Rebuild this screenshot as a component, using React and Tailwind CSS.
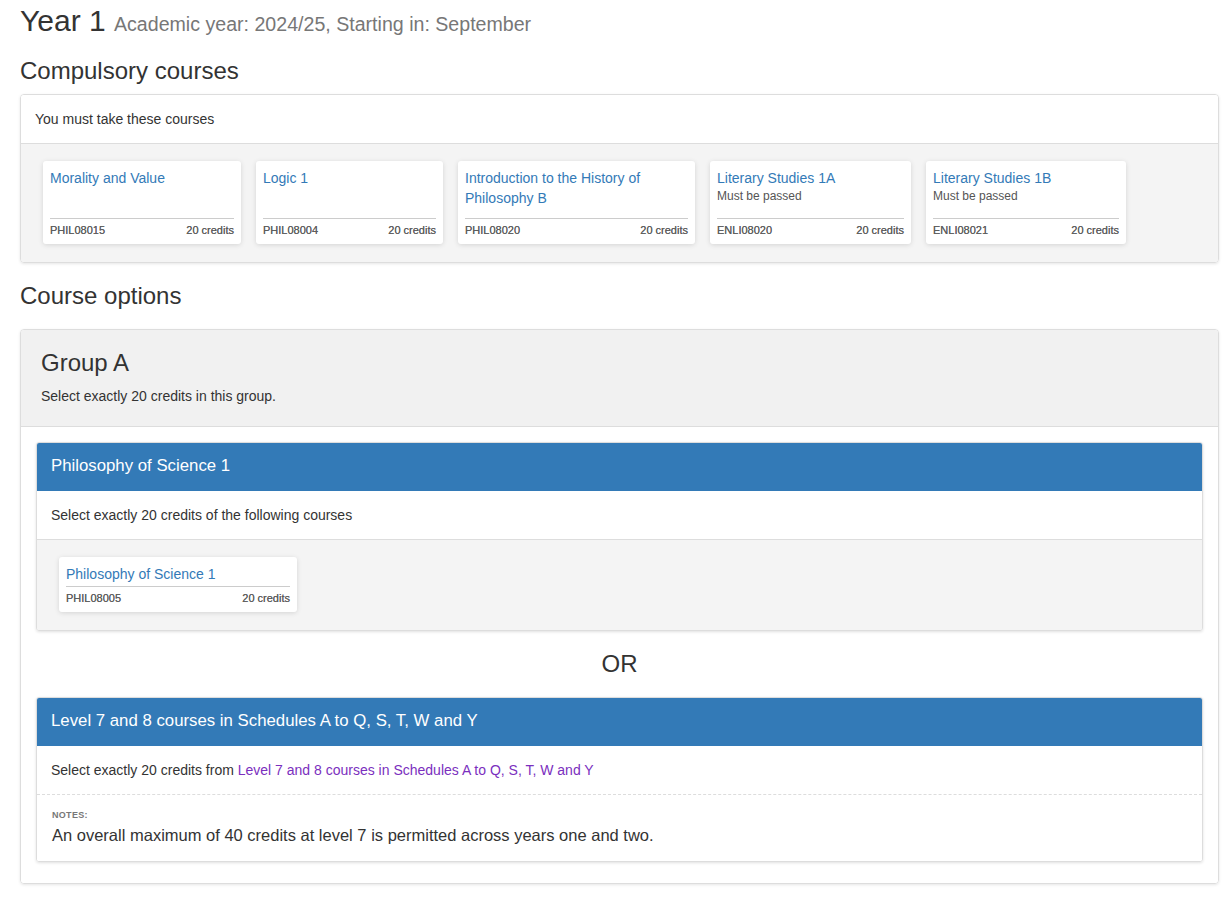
const font = { fontFamily: '"Liberation Sans", Arial, sans-serif' };

function Card({ title, sub, code, width, tall }) {
  return (
    <div
      className="bg-white rounded-[3px] shadow-[0_1px_5px_rgba(0,0,0,0.13)] px-[7px] pt-[7px] pb-[6px] shrink-0"
      style={{ width }}
    >
      <div className={tall ? "min-h-[50px]" : "mb-[2px]"}>
        <a className="block text-[14px] leading-[20px] text-[#337ab7]">{title}</a>
        {sub && <div className="text-[12px] leading-[17px] text-[#555]">{sub}</div>}
      </div>
      <div className="border-t border-[#ccc] pt-[4px] flex justify-between text-[11px] leading-[15px] text-[#5e5e5e] [text-shadow:0_0_0.2px_#666]">
        <span>{code}</span>
        <span>20 credits</span>
      </div>
    </div>
  );
}

function BluePanel({ title, children }) {
  return (
    <div className="border border-[#ddd] rounded-[3px] shadow-[0_1px_3px_rgba(0,0,0,0.12)] overflow-hidden">
      <div className="bg-[#337ab7] -mx-px -mt-px text-white text-[16.8px] leading-[20px] px-[15px] pt-[14px] pb-[15px]">{title}</div>
      {children}
    </div>
  );
}

export default function App() {
  return (
    <div className="bg-white text-[#333] pl-[20px] pr-[4px] pb-[14px] min-h-[897px]" style={font}>
      <h2 className="pt-[4px] text-[30px] leading-[33px]">
        Year 1 <small className="text-[19.6px] text-[#777]">Academic year: 2024/25, Starting in: September</small>
      </h2>

      <h3 className="mt-[17px] text-[24px] leading-[26px]">Compulsory courses</h3>
      <div className="mt-[10px] border border-[#ddd] rounded-[4px] shadow-[0_1px_3px_rgba(0,0,0,0.1)] overflow-hidden">
        <div className="px-[14px] py-[14px] text-[14px] leading-[20px] border-b border-[#ddd] bg-white">
          You must take these courses
        </div>
        <div className="bg-[#f4f4f4] pl-[22px] pt-[17px] pb-[18px] flex gap-[15px]">
          <Card tall title="Morality and Value" code="PHIL08015" width={198} />
          <Card tall title="Logic 1" code="PHIL08004" width={187} />
          <Card tall title={<>Introduction to the History of<br />Philosophy B</>} code="PHIL08020" width={237} />
          <Card tall title="Literary Studies 1A" sub="Must be passed" code="ENLI08020" width={201} />
          <Card tall title="Literary Studies 1B" sub="Must be passed" code="ENLI08021" width={200} />
        </div>
      </div>

      <h3 className="mt-[20px] text-[24px] leading-[26px]">Course options</h3>
      <div className="mt-[20px] border border-[#ddd] rounded-[4px] shadow-[0_1px_3px_rgba(0,0,0,0.1)] overflow-hidden">
        <div className="bg-[#f1f1f1] border-b border-[#ddd] px-[20px] pt-[20px] pb-[20px]">
          <h3 className="text-[24px] leading-[26px]">Group A</h3>
          <p className="mt-[10px] text-[14px] leading-[20px]">Select exactly 20 credits in this group.</p>
        </div>
        <div className="bg-white px-[15px] pt-[15px] pb-[21px]">
          <BluePanel title="Philosophy of Science 1">
            <div className="px-[14px] py-[14px] text-[14px] leading-[20px] border-b border-[#ddd] bg-white">
              Select exactly 20 credits of the following courses
            </div>
            <div className="bg-[#f4f4f4] pl-[22px] pt-[17px] pb-[18px] flex">
              <Card title="Philosophy of Science 1" code="PHIL08005" width={238} />
            </div>
          </BluePanel>

          <div className="text-center text-[24px] leading-[26px] mt-[20px] mb-[20px]">OR</div>

          <BluePanel title="Level 7 and 8 courses in Schedules A to Q, S, T, W and Y">
            <div className="px-[14px] py-[14px] text-[14px] leading-[20px] border-b border-dashed border-[#ddd] bg-white">
              Select exactly 20 credits from{" "}
              <a className="text-[#7b2fbe]">Level 7 and 8 courses in Schedules A to Q, S, T, W and Y</a>
            </div>
            <div className="px-[15px] pt-[15px] pb-[15px] bg-white">
              <div className="text-[9px] leading-[10px] font-bold uppercase text-[#777] tracking-[0.3px]">Notes:</div>
              <div className="text-[16.5px] leading-[22px] mt-[4px]">
                An overall maximum of 40 credits at level 7 is permitted across years one and two.
              </div>
            </div>
          </BluePanel>
        </div>
      </div>
    </div>
  );
}
